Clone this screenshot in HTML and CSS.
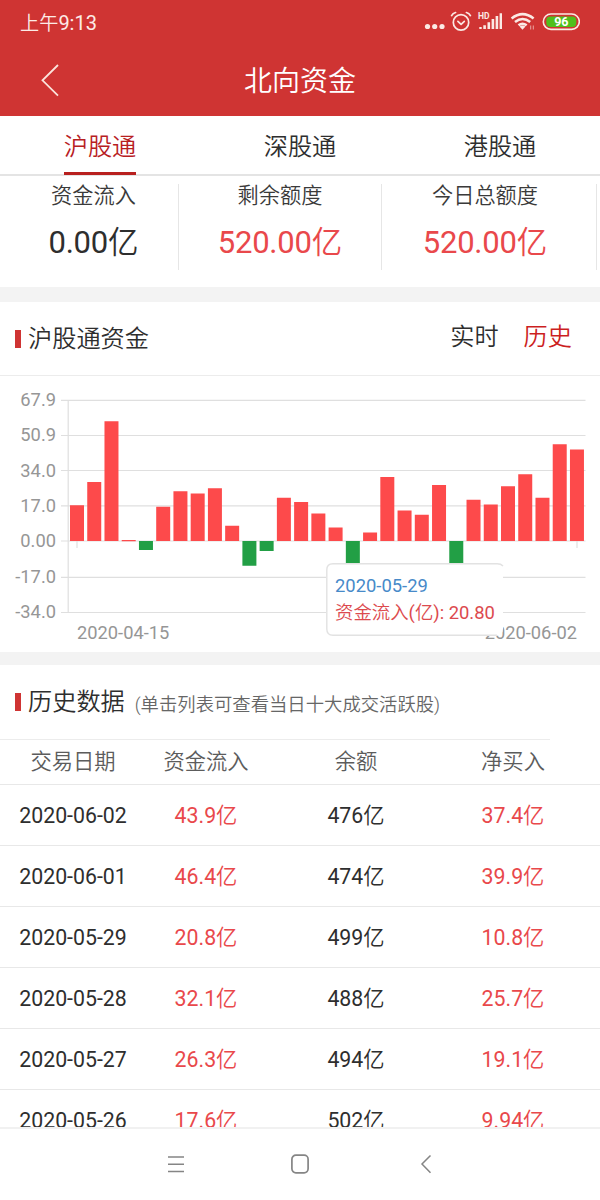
FILE: index.html
```html
<!DOCTYPE html>
<html lang="zh-CN">
<head>
<meta charset="utf-8">
<title>北向资金</title>
<link rel="stylesheet" href="styles.css">
</head>
<body>
<div class="screen">
  <header class="top">
    <div class="status">
      <span class="clock">上午<b>9:13</b></span>
      <svg class="status-icons" width="160" height="24" viewBox="0 0 160 24" fill="none" stroke="#fbe9e4">
        <g fill="#fbe9e4" stroke="none"><circle cx="7.5" cy="16.5" r="2.6"/><circle cx="14.7" cy="16.5" r="2.6"/><circle cx="22" cy="16.5" r="2.6"/></g>
        <g stroke-width="1.7" stroke-linecap="round" stroke-linejoin="round"><circle cx="41" cy="12.4" r="7.7"/><path d="M37.9 11.4l3.2 3 3.2-3M31.6 5.6q1.2-2.4 4-3.1M50.4 5.6q-1.2-2.4-4-3.1"/></g>
        <g fill="#fbe9e4" stroke="none"><path d="M59.3 17h2.4v2h-2.4zM63.3 15.2h2.6V19h-2.6zM67.5 12.2h2.6V19h-2.6zM71.6 9h2.6v10h-2.6zM75.6 6h2.6v13h-2.6zM79.6 3.2H82V19h-2.4z"/></g>
        <text class="hd" x="58" y="8.8">HD</text>
        <g stroke-width="2.6"><path d="M91.6 8.4q11-8.6 22 0M95 12q7.600-6 15.200 0M98.500 15.300q4-3 8.200 0"/></g>
        <path d="M99.500 16.500q3-2 6 0l-3 3.300z" fill="#fbe9e4" stroke="none"/>
        <path d="M110.700 15.500v4M113.300 15.500v4" stroke-width=".9" opacity=".7"/>
        <rect x="123.300" y="4" width="36" height="15.400" rx="7.700" stroke-width="1.600"/>
        <rect x="126.300" y="6.600" width="30" height="10.400" rx="4" fill="#4fbf1c" stroke="none"/>
        <text class="battery" x="141.300" y="16.300" text-anchor="middle">96</text>
      </svg>
    </div>
    <div class="titlebar">
      <svg class="back" width="20" height="34" viewBox="0 0 20 34"><path d="M18 2L2.500 17.300 18 32.600" fill="none" stroke="#fbe4dc" stroke-width="1.800"/></svg>
      <h1 class="title">北向资金</h1>
    </div>
  </header>

  <nav class="tabs">
    <a class="tab active"><span>沪股通</span></a>
    <a class="tab"><span>深股通</span></a>
    <a class="tab"><span>港股通</span></a>
  </nav>

  <section class="stats">
    <div class="stat first"><div class="label">资金流入</div><div class="value"><b>0.00</b>亿</div></div>
    <div class="stat"><div class="label">剩余额度</div><div class="value red"><b>520.00</b>亿</div></div>
    <div class="stat last"><div class="label">今日总额度</div><div class="value red"><b>520.00</b>亿</div></div>
  </section>

  <section class="chart-panel">
    <div class="panel-head">
      <i class="mark"></i><h2>沪股通资金</h2>
      <div class="modes"><span>实时</span><span class="on">历史</span></div>
    </div>
    <div class="chart">
      <svg width="600" height="276" viewBox="0 376 600 276">
        <path class="grid" d="M61 400.300H585.500M61 435.500H585.500M61 470.500H585.500M61 505.800H585.500M61 541H585.500M61 577.300H585.500M61 612.500H585.500M68.200 400V613M77 541v7M577 541v7"/>
        <g class="axis" text-anchor="end">
          <text x="56" y="405.500">67.9</text><text x="56" y="441">50.9</text><text x="56" y="476.500">34.0</text><text x="56" y="511.500">17.0</text><text x="56" y="547">0.00</text><text x="56" y="582.500">-17.0</text><text x="56" y="618">-34.0</text>
        </g>
        <g class="axis"><text x="77" y="639">2020-04-15</text><text x="577" y="639" text-anchor="end">2020-06-02</text></g>
        <path class="up" d="M70 505.300h14V541h-14zM87.240 482h14V541h-14zM104.480 421.200h14V541h-14zM121.720 540h14v1.200h-14zM156.200 506.700h14V541h-14zM173.440 491.200h14V541h-14zM190.680 493.400h14V541h-14zM207.920 488.300h14V541h-14zM225.160 525.800h14V541h-14zM276.880 497.700h14V541h-14zM294.120 502h14V541h-14zM311.360 513.600h14V541h-14zM328.600 527.600h14V541h-14zM363.080 532.600h14V541h-14zM380.320 477h14V541h-14zM397.560 510.600h14V541h-14zM414.800 514.800h14V541h-14zM432.040 484.900h14V541h-14zM466.520 499.700h14V541h-14zM483.760 504.400h14V541h-14zM501 486.200h14V541h-14zM518.240 474.200h14V541h-14zM535.480 497.800h14V541h-14zM552.720 444.300h14V541h-14zM569.960 449.400h14V541h-14z"/>
        <path class="down" d="M138.960 541h14v9h-14zM242.400 541h14v24.800h-14zM259.640 541h14v10h-14zM345.840 541h14v23h-14zM449.280 541h14v23h-14z"/>
      </svg>
      <div class="tip">
        <svg class="tip-frame" width="178" height="73" viewBox="0 0 178 73"><rect width="177" height="73" rx="7" fill="#fff"/><path d="M177 3Q175 .8 171 .8H7Q.8.800.8 7V66Q.8 72.200 7 72.200H171" fill="none" stroke="#e2e2e2" stroke-width="1.400"/></svg>
        <div class="tip-text"><div class="tip-date">2020-05-29</div><div class="tip-value">资金流入<b>(</b>亿<b>): 20.80</b></div></div>
      </div>
    </div>
  </section>

  <section class="history">
    <div class="panel-head history-head"><i class="mark"></i><h2>历史数据</h2><span class="hint">(单击列表可查看当日十大成交活跃股)</span></div>
    <div class="row head"><span>交易日期</span><span>资金流入</span><span>余额</span><span>净买入</span></div>
    <div class="row"><b>2020-06-02</b><span class="red"><b>43.9</b>亿</span><span><b>476</b>亿</span><span class="red"><b>37.4</b>亿</span></div>
    <div class="row"><b>2020-06-01</b><span class="red"><b>46.4</b>亿</span><span><b>474</b>亿</span><span class="red"><b>39.9</b>亿</span></div>
    <div class="row"><b>2020-05-29</b><span class="red"><b>20.8</b>亿</span><span><b>499</b>亿</span><span class="red"><b>10.8</b>亿</span></div>
    <div class="row"><b>2020-05-28</b><span class="red"><b>32.1</b>亿</span><span><b>488</b>亿</span><span class="red"><b>25.7</b>亿</span></div>
    <div class="row"><b>2020-05-27</b><span class="red"><b>26.3</b>亿</span><span><b>494</b>亿</span><span class="red"><b>19.1</b>亿</span></div>
    <div class="row"><b>2020-05-26</b><span class="red"><b>17.6</b>亿</span><span><b>502</b>亿</span><span class="red"><b>9.94</b>亿</span></div>
  </section>

  <footer class="navbar">
    <svg width="18" height="18" viewBox="0 0 18 18"><path d="M1 2h16M1 9.200h16M1 16.500h16" stroke="#858585" stroke-width="1.500"/></svg>
    <svg width="20" height="20" viewBox="0 0 20 20"><rect x="1.900" y="1.200" width="16.200" height="17.600" rx="4" fill="none" stroke="#858585" stroke-width="1.700"/></svg>
    <svg width="12" height="20" viewBox="0 0 12 20"><path d="M10.500 1.500L2 10l8.500 8.800" fill="none" stroke="#858585" stroke-width="1.500"/></svg>
  </footer>
</div>
</body>
</html>
```
FILE: styles.css
```css
* { box-sizing: border-box; }
body {
  margin: 0;
  background: #fff;
  color: #2e2e2e;
  font-family: Roboto, "Noto Sans CJK SC", sans-serif;
  font-weight: 350;
}
b { font-weight: 400; }
h1, h2 { margin: 0; font-weight: 350; }
.screen { width: 600px; height: 1200px; display: flex; flex-direction: column; overflow: hidden; }

.top { height: 116px; flex: none; background: #cf3433; color: #fff; }
.status { height: 44px; padding: 0 19px 0 20px; display: flex; justify-content: space-between; align-items: center; }
.clock { font-size: 19.200px; line-height: 44px; padding-top: 2px; color: #fdebe7; }
.clock b { font-size: 20px; }
.status-icons { margin: -1px 1px 0 0; }
.hd { font: 700 8.5px Roboto, sans-serif; fill: #fbe9e4; stroke: none; }
.battery { font: 700 12.5px Roboto, sans-serif; fill: #fff; stroke: none; }
.titlebar { height: 72px; display: grid; grid-template-columns: 80px 1fr 80px; align-items: center; }
.back { margin-left: 40px; }
.title { font-size: 28px; line-height: 68px; padding-top: 4px; text-align: center; }

.tabs { height: 60px; flex: none; display: grid; grid-template-columns: repeat(3, 1fr); border-bottom: 2px solid #e4e4e4; }
.tab { display: flex; justify-content: center; font-size: 24.2px; line-height: 62px; }
.tab span { height: 59px; }
.active { color: #b8201f; }
.active span { border-bottom: 3px solid #b8201f; }

.stats { height: 111px; flex: none; padding-top: 8px; display: grid; grid-template-columns: 179px 203px 215px 3px; align-items: start; }
.stat { height: 86px; border-right: 1px solid #e6e6e6; text-align: center; }
.first { padding-left: 9px; }
.last { padding-right: 8px; }
.label { font-size: 21.200px; line-height: 24px; color: #3a3a3a; }
.value { font-size: 30.500px; line-height: 36px; margin-top: 17px; }
.value b { font-size: 31px; letter-spacing: -.2px; }
.red { color: #e9484b; }

.chart-panel { flex: none; border-top: 15px solid #f3f3f3; height: 365px; }
.panel-head { display: flex; align-items: center; height: 74px; padding-left: 15px; border-bottom: 1px solid #ececec; }
.mark { width: 6px; height: 18px; margin-right: 7px; background: #cf3433; }
h2 { font-size: 24.200px; line-height: 36px; }
.modes { margin: 0 28px 4px auto; display: flex; gap: 25px; font-size: 24.200px; line-height: 36px; }
.on { color: #cc1f1f; }
.chart { position: relative; height: 276px; }
.chart > svg { display: block; }
.grid { stroke: #dfdfdf; stroke-width: 1.200; fill: none; }
.axis { font: 400 18.300px Roboto, sans-serif; fill: #969696; }
.up { fill: #fd4a4b; }
.down { fill: #229f45; }
.tip { position: absolute; left: 326px; top: 187px; width: 178px; height: 73px; }
.tip-frame { position: absolute; left: 0; top: 0; }
.tip-text { position: relative; padding: 9px 0 0 9px; font-size: 18.400px; line-height: 28px; white-space: nowrap; }
.tip-date { color: #478ac9; font-weight: 400; line-height: 27px; }
.tip-value { color: #dc4a4e; }

.history { flex: 1; min-height: 0; overflow: hidden; border-top: 13px solid #f3f3f3; }
.history-head { border-bottom: 0; height: 74px; }
.hint { margin: 1px 0 0 10px; font-size: 18.350px; color: #666; }
.row { display: grid; grid-template-columns: 146px 120px 180px 134px; height: 61.100px; line-height: 61px; text-align: center; font-size: 21.300px; border-bottom: 1px solid #e8e8e8; }
.head { height: 46px; line-height: 46px; color: #5c5c5c; background: linear-gradient(#ececec, #ececec) 0 0 / 550px 1px no-repeat; }

.navbar { height: 73px; flex: none; border-top: 2px solid #f1f1f1; display: grid; grid-template-columns: 124px 124px 128px; padding: 0 0 1px 114px; align-items: center; justify-items: center; }
```
